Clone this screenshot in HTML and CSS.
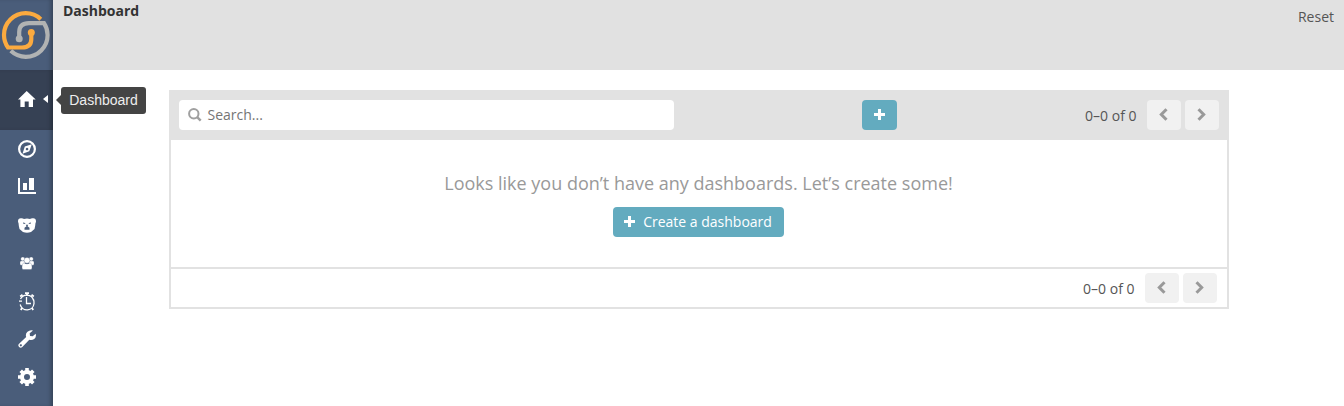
FILE: index.html
```html
<!DOCTYPE html>
<html lang="en">
<head>
<meta charset="utf-8">
<title>Dashboard</title>
<link rel="stylesheet" href="styles.css">
</head>
<body>
<div class="app">
  <nav class="sidebar">
    <a class="logo">
      <svg width="53" height="70" viewBox="0 0 53 70" fill="none" stroke-width="4.2">
        <path d="M40.800 19.200A21.800 21.800 0 0 0 25.800 13.200A21.800 21.800 0 0 0 4 35A21.800 21.800 0 0 0 8 47.500H22Q31.300 47.500 31.300 39V33" stroke="#fbaa3f"/>
        <circle cx="31.300" cy="32.600" r="3.500" fill="#fbaa3f" stroke="none"/>
        <path d="M10.800 50.800A21.800 21.800 0 0 0 25.800 56.800A21.800 21.800 0 0 0 47.600 35A21.800 21.800 0 0 0 44 23.200H29Q19.200 23.200 19.200 32V38" stroke="#b1b3b3"/>
        <circle cx="19.200" cy="38.800" r="3.500" fill="#b1b3b3" stroke="none"/>
      </svg>
    </a>
    <a class="nav-item active">
      <svg width="18" height="16" viewBox="0.3 0 18 16" fill="#fff"><path d="M9 0 .3 8.500h2.400V16H7v-5.500h4V16h4.300V8.500H18z"/></svg>
      <span class="caret"></span>
      <span class="tooltip">Dashboard</span>
    </a>
    <a class="nav-item">
      <svg width="18" height="18" viewBox="0 0 18 18"><circle cx="9" cy="9" r="7.900" fill="none" stroke="#fff" stroke-width="2.200"/><path fill="#fff" fill-rule="evenodd" d="M13.800 4.200 6.800 6.500 4.500 13.800 11.300 11.300zM9 7.700a1.300 1.300 0 1 0 .1 0z"/></svg>
    </a>
    <a class="nav-item chart">
      <svg width="18" height="17" viewBox="0 0 18 17" fill="#fff"><path d="M0 1h2v14h16v2H0zM5 6h4v7H5zM11 1h5v12h-5z"/></svg>
    </a>
    <a class="nav-item">
      <svg width="18" height="15" viewBox="0 0 18 15"><path fill="#fff" d="M3 .3Q5 .2 6 1Q9 .2 12 1Q13 .2 15 .3Q18 .2 18 3.300Q18 4.500 17.500 5Q17.300 8 16.500 11L13 14Q9 15.500 5 14L1.500 11Q.7 8 .5 5Q0 4.500 0 3.300Q0 .2 3 .3z"/><path fill="#4a5d7a" d="M5 4.500 7.200 5v1L5 5.500zM13 4.500 10.800 5v1l2.200-.5zM7.800 6.800h2.400L9.500 8.300 11.500 9.700v2h-5v-2L8.500 8.300z"/></svg>
    </a>
    <a class="nav-item">
      <svg width="14" height="14" viewBox="0 0 14 14" fill="#fff" stroke="#4a5d7a" stroke-width=".3"><circle cx="2.800" cy="3" r="2.100"/><circle cx="11.200" cy="3" r="2.100"/><rect x="0" y="5" width="5" height="4.300" rx="1.200"/><rect x="9" y="5" width="5" height="4.300" rx="1.200"/><circle cx="7" cy="4.300" r="2.900"/><path d="M3.500 6.900Q7 9 10.500 6.900 12.200 8 12 12Q12 13.500 10.500 13.500h-7Q2 13.500 2 12 1.800 8 3.500 6.900z"/></svg>
    </a>
    <a class="nav-item">
      <svg width="18" height="19" viewBox="0 0 18 19" fill="none" stroke="#fff"><path stroke-width="1.300" d="M2.500 7A7 7 0 0 1 15.500 8.200M2.200 12.500A7 7 0 0 0 16 11.500Q16.200 9.500 15.500 7.500M8.500 5v6.500H13M1 9.200h3"/><path stroke-width="1.800" d="M7 1.200h4M9 1.200v2.500M2.200 4.500 4.500 2.800M13.500 2.800 15.800 4.500M4.200 15.800 2.800 18M13.800 15.800 15.200 18"/></svg>
    </a>
    <a class="nav-item">
      <svg width="18" height="18" viewBox="0 0 18 18"><path fill="#fff" fill-rule="evenodd" d="M15 .5 11.700 3.300 12 6 14.700 6.300 17.700 3.700Q18.600 7 16.200 9Q14 10.500 11.300 9.700L4.300 16.900Q2.700 18.500 1.100 16.900Q-.5 15.300 1.100 13.700L8.200 7Q7.100 3.900 9.500 1.700Q12-.5 15 .5zM2.800 14.300a1 1 0 1 0 .1 0z"/></svg>
    </a>
    <a class="nav-item">
      <svg width="18" height="18" viewBox="0 0 18 18"><circle cx="9" cy="9" r="5" fill="none" stroke="#fff" stroke-width="4"/><g stroke="#fff" stroke-width="3.600"><path d="M9 0v4M9 14v4M0 9h4M14 9h4M2.700 2.700l2.800 2.800M12.500 12.500l2.800 2.800M2.700 15.300l2.800-2.800M12.500 5.500l2.800-2.800"/></g></svg>
    </a>
  </nav>
  <main class="main">
    <header class="page-header">
      <h1 class="page-title">Dashboard</h1>
      <a class="reset">Reset</a>
    </header>
    <section class="panel">
      <div class="toolbar">
        <div class="search">
          <svg width="14" height="14" viewBox="0 0 14 14" fill="none" stroke="#a0a0a0" stroke-width="2"><circle cx="5.800" cy="5.800" r="4.700"/><path stroke-width="2.500" d="m9.200 9.200 3.500 3.500"/></svg>
          <span>Search...</span>
        </div>
        <div class="toolbar-middle">
          <a class="button add"><svg width="11" height="11" viewBox="0 0 11 11" fill="#fff"><path d="M4 0h3v4h4v3H7v4H4V7H0V4h4z"/></svg></a>
        </div>
        <div class="pager">
          <span>0–0 of 0</span>
          <a class="page-button"><svg width="9" height="13" viewBox="0 0 9 13"><path d="M7.500 1.200 2.300 6.500l5.200 5.300"/></svg></a>
          <a class="page-button"><svg width="9" height="13" viewBox="0 0 9 13"><path d="m1.500 1.200 5.200 5.300-5.200 5.300"/></svg></a>
        </div>
      </div>
      <div class="empty">
        <p class="message">Looks like you don’t have any dashboards. Let’s create some!</p>
        <a class="button create"><svg width="11" height="11" viewBox="0 0 11 11" fill="#fff"><path d="M4 0h3v4h4v3H7v4H4V7H0V4h4z"/></svg><span>Create a dashboard</span></a>
      </div>
      <div class="panel-footer">
        <div class="pager">
          <span>0–0 of 0</span>
          <a class="page-button"><svg width="9" height="13" viewBox="0 0 9 13"><path d="M7.500 1.200 2.300 6.500l5.200 5.300"/></svg></a>
          <a class="page-button"><svg width="9" height="13" viewBox="0 0 9 13"><path d="m1.500 1.200 5.200 5.300-5.200 5.300"/></svg></a>
        </div>
      </div>
    </section>
  </main>
</div>
</body>
</html>
```
FILE: styles.css
```css
* { box-sizing: border-box; }
body {
  margin: 0;
  background: #fff;
  color: #555;
  font: 14px/20px "Open Sans", sans-serif;
}
svg { display: block; flex: none; }
.app { display: flex; height: 406px; }
.sidebar {
  width: 53px;
  flex: none;
  background: #4a5d7a;
  box-shadow: inset -4px 0 4px -2px rgba(0, 0, 0, .3);
}
.logo { display: block; height: 70px; }
.nav-item {
  position: relative;
  display: flex;
  align-items: center;
  justify-content: center;
  height: 38px;
}
.nav-item.active {
  height: 60px;
  padding-bottom: 2px;
  background: #364154;
  box-shadow: inset -4px 0 4px -2px rgba(0, 0, 0, .3);
}
.nav-item.chart { padding-bottom: 3px; }
.caret {
  position: absolute;
  left: 43px;
  top: 25px;
  border: solid transparent;
  border-width: 4px 5px 4px 0;
  border-right-color: #fff;
}
.tooltip {
  position: absolute;
  left: 61px;
  top: 17px;
  width: 85px;
  height: 27px;
  border-radius: 3px;
  background: #444;
  color: #eee;
  font: 14px/27px "Liberation Sans", Arial, sans-serif;
  text-align: center;
}
.tooltip::before {
  content: "";
  position: absolute;
  left: -5px;
  top: 8px;
  border: solid transparent;
  border-width: 5px 5px 5px 0;
  border-right-color: #444;
}
.main { flex: 1; }
.page-header {
  display: flex;
  justify-content: space-between;
  height: 70px;
  padding: 0 10px;
  background: #e1e1e1;
}
.page-title { margin: 1px 0 0; color: #333; font-size: 14px; line-height: 20px; }
.reset { margin-top: 7px; }
.panel {
  width: 1060px;
  height: 219px;
  margin: 20px 0 0 116px;
  border: 2px solid #e2e2e2;
  border-top: 0;
}
.toolbar {
  display: flex;
  align-items: center;
  height: 50px;
  padding: 0 8px;
  background: #e2e2e2;
}
.search {
  display: flex;
  align-items: center;
  gap: 5.500px;
  width: 495px;
  height: 30px;
  padding-left: 9px;
  border-radius: 4px;
  background: #fff;
  color: #757575;
}
.toolbar-middle { flex: 1; padding-left: 188px; }
.button {
  display: flex;
  align-items: center;
  justify-content: center;
  height: 30px;
  border-radius: 4px;
  background: #63abbf;
  color: #fff;
}
.button svg { margin-bottom: 1px; }
.add { width: 35px; }
.pager { display: flex; align-items: center; gap: 4px; color: #555; }
.pager span { margin: 2px 6.500px 0 0; }
.page-button {
  display: flex;
  align-items: center;
  justify-content: center;
  width: 34px;
  height: 30px;
  padding: 0 1px 1px 0;
  border-radius: 4px;
  background: #f1f1f1;
}
.page-button path { fill: none; stroke: #999; stroke-width: 3; }
.empty {
  display: flex;
  flex-direction: column;
  align-items: center;
  height: 127px;
  padding: 31px 1px 0 0;
}
.message { margin: 0 0 11px; color: #999; font-size: 18px; line-height: 25px; }
.create { width: 171px; gap: 8px; padding-right: 1px; }
.panel-footer {
  display: flex;
  align-items: center;
  justify-content: flex-end;
  height: 40px;
  padding-right: 10px;
  border-top: 2px solid #e2e2e2;
}
```
